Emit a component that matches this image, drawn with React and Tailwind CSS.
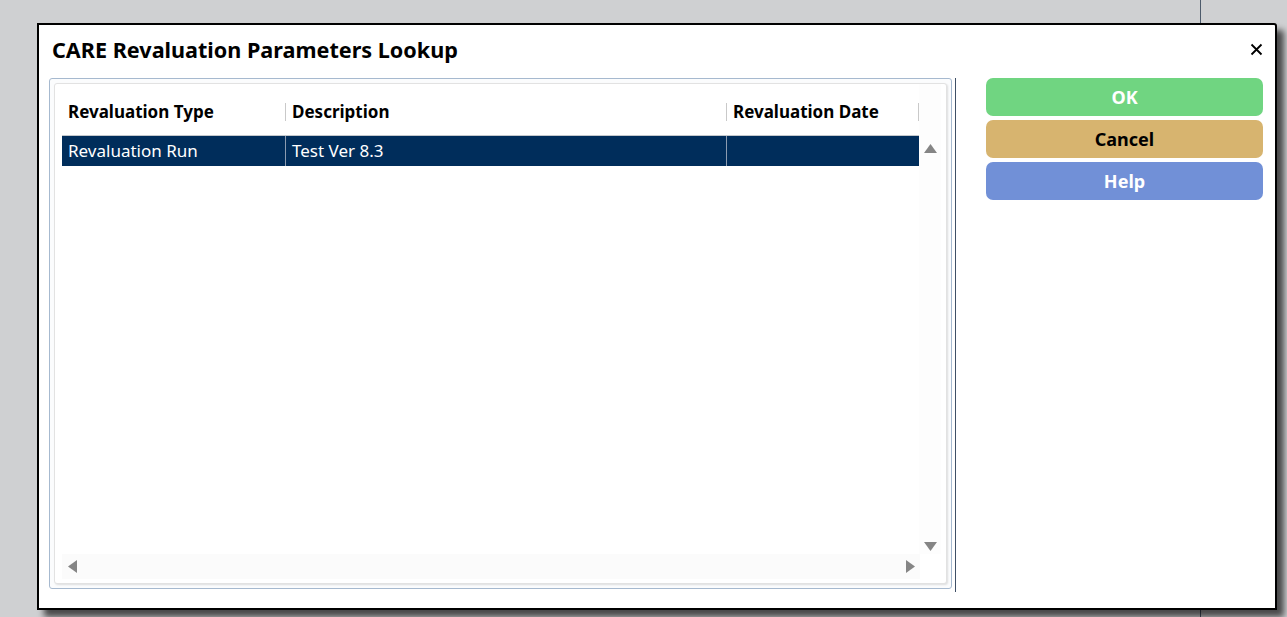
import { useState } from 'react';

const columns = [
  { key: 'type', label: 'Revaluation Type', width: 'w-[223px]', pad: 'pl-[6px]' },
  { key: 'desc', label: 'Description', width: 'w-[441px]', pad: 'pl-[6px]' },
  { key: 'date', label: 'Revaluation Date', width: 'w-[193px]', pad: 'pl-[6px]' },
];

const rows = [{ type: 'Revaluation Run', desc: 'Test Ver 8.3', date: '' }];

function Tri({ dir }) {
  const pts = {
    up: '0,9 6.5,0 13,9',
    down: '0,0 13,0 6.5,9',
    left: '9,0 9,13 0,6.5',
    right: '0,0 9,6.5 0,13',
  }[dir];
  const vert = dir === 'up' || dir === 'down';
  return (
    <svg width={vert ? 13 : 9} height={vert ? 9 : 13} viewBox={vert ? '0 0 13 9' : '0 0 9 13'}>
      <polygon points={pts} fill="#858585" />
    </svg>
  );
}

export default function App() {
  const [selected, setSelected] = useState(0);

  return (
    <div className="relative w-[1287px] h-[617px] overflow-hidden bg-[#cfd0d2] pt-[23px] pl-[37px] font-['Noto_Sans',sans-serif]">
      {/* page behind the dialog */}
      <div className="absolute left-[1200px] top-0 h-full w-px bg-[#4d5a6b]" />

      {/* Dialog */}
      <div className="relative w-[1240px] h-[587px] bg-white border-2 border-black rounded-tr-[3px] shadow-[7px_7px_6px_rgba(0,0,0,0.65)] flex flex-col">
        <div className="flex items-start justify-between pl-[13px] pr-[12px] pt-[10px] h-[53px]">
          <h1 className="text-[21.6px] leading-[30px] font-bold text-black">CARE Revaluation Parameters Lookup</h1>
          <button className="mt-[8px] text-black">
            <svg width="13" height="13" viewBox="0 0 13 13">
              <path d="M1.5 1.5L11.5 11.5M11.5 1.5L1.5 11.5" stroke="#000" strokeWidth="1.8" />
            </svg>
          </button>
        </div>

        <div className="flex pl-[10px]">
          {/* Grid panel */}
          <div className="w-[903px] h-[511px] border border-[#a6b9cf] rounded-[3px] p-[4px] bg-[#fbfcfd]">
            <div className="h-full border border-[#e2e2e2] rounded-[3px] bg-white shadow-[1px_1px_2px_rgba(0,0,0,0.12)] flex flex-col pl-[7px]">
              <div className="flex flex-1">
                <div className="flex flex-col">
                  <div className="flex mt-[13px] h-[30px] items-center">
                    {columns.map((c, i) => (
                      <div key={c.key} className={`${c.width} ${c.pad} h-[18px] flex items-center text-[17px] font-bold text-black ${i > 0 ? 'border-l border-[#c9c9c9]' : ''} ${i === columns.length - 1 ? 'border-r' : ''}`}>
                        {c.label}
                      </div>
                    ))}
                  </div>
                  <div className="mt-[8px] border-t border-[#c4c8cc]">
                    {rows.map((r, ri) => (
                      <div
                        key={ri}
                        onClick={() => setSelected(ri)}
                        className={`flex h-[30px] ${selected === ri ? 'bg-[#002d5b] text-white' : 'text-black'}`}
                      >
                        {columns.map((c, i) => (
                          <div key={c.key} className={`${c.width} ${c.pad} flex items-center text-[17px] ${i > 0 ? 'border-l border-[#8b9bb0]' : ''}`}>
                            {r[c.key]}
                          </div>
                        ))}
                      </div>
                    ))}
                  </div>
                </div>
                {/* vertical scrollbar */}
                <div className="w-[22px] flex flex-col items-center justify-between pt-[60px] pb-[3px] bg-[#fdfdfd]">
                  <Tri dir="up" />
                  <Tri dir="down" />
                </div>
              </div>
              {/* horizontal scrollbar */}
              <div className="h-[25px] w-[858px] mb-[4px] flex items-center justify-between pl-[6px] pr-[5px] bg-[#fbfbfb]">
                <Tri dir="left" />
                <Tri dir="right" />
              </div>
            </div>
          </div>

          <div className="ml-[3px] w-px h-[514px] bg-[#3f4f66]" />

          {/* Buttons */}
          <div className="ml-[30px] w-[277px] flex flex-col gap-[4px]">
            <button className="h-[38px] rounded-[7px] bg-[#70d581] text-white text-[18px] font-bold">OK</button>
            <button className="h-[38px] rounded-[7px] bg-[#d7b46f] text-black text-[18px] font-bold">Cancel</button>
            <button className="h-[38px] rounded-[7px] bg-[#7190d7] text-white text-[18px] font-bold">Help</button>
          </div>
        </div>
      </div>
    </div>
  );
}
